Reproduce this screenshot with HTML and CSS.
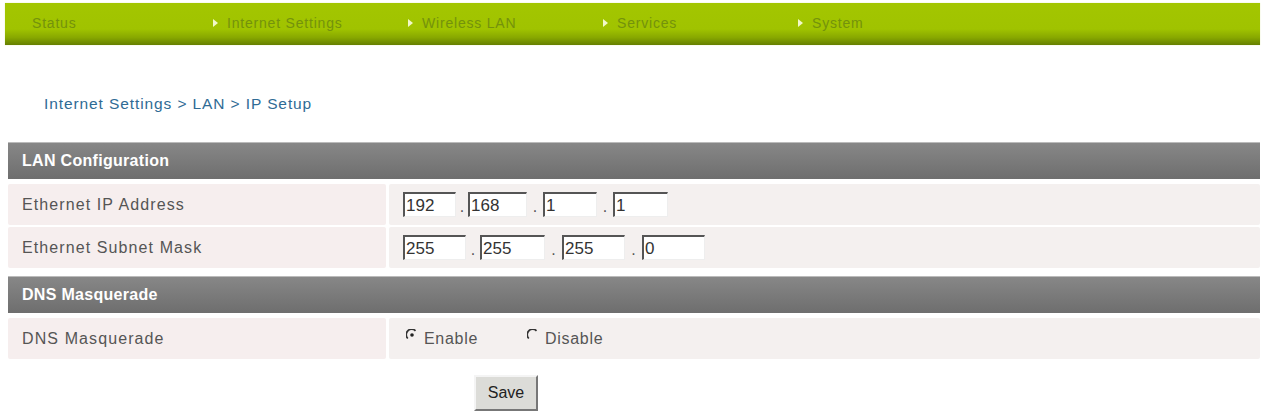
FILE: index.html
```html
<!DOCTYPE html>
<html lang="en">
<head>
    <meta charset="UTF-8">
    <meta name="viewport" content="width=device-width, initial-scale=1.0">
    <title>IP Setup</title>
    <link rel="stylesheet" href="styles.css">
</head>
<body>
    <div class="menu">
        <a class="menu-item"><span class="arrow hidden"></span>Status</a>
        <a class="menu-item"><span class="arrow"></span>Internet Settings</a>
        <a class="menu-item"><span class="arrow"></span>Wireless LAN</a>
        <a class="menu-item"><span class="arrow"></span>Services</a>
        <a class="menu-item"><span class="arrow"></span>System</a>
    </div>

    <p class="crumbs">Internet Settings &gt; LAN &gt; IP Setup</p>

    <form class="settings" onsubmit="return false;">
        <div class="section-head">LAN Configuration</div>
        <div class="row first">
            <div class="label">Ethernet IP Address</div>
            <div class="value ip ip-addr">
                <input type="text" class="octet" value="192"><span class="dot">.</span>
                <input type="text" class="octet" value="168"><span class="dot">.</span>
                <input type="text" class="octet" value="1"><span class="dot">.</span>
                <input type="text" class="octet" value="1">
            </div>
        </div>
        <div class="row">
            <div class="label">Ethernet Subnet Mask</div>
            <div class="value ip ip-mask">
                <input type="text" class="octet" value="255"><span class="dot">.</span>
                <input type="text" class="octet" value="255"><span class="dot">.</span>
                <input type="text" class="octet" value="255"><span class="dot">.</span>
                <input type="text" class="octet" value="0">
            </div>
        </div>

        <div class="section-head second">DNS Masquerade</div>
        <div class="row first">
            <div class="label">DNS Masquerade</div>
            <div class="value">
                <label class="radio">
                    <svg width="12" height="12" viewBox="0 0 12 12">
                        <path d="M9.5 1.8 A5 5 0 0 0 1.8 9.5" fill="none" stroke="#333" stroke-width="1.7"/>
                        <circle cx="6" cy="6" r="1.8" fill="#222"/>
                    </svg>
                    Enable
                </label>
                <label class="radio">
                    <svg width="12" height="12" viewBox="0 0 12 12">
                        <path d="M9.5 1.8 A5 5 0 0 0 1.8 9.5" fill="none" stroke="#333" stroke-width="1.7"/>
                    </svg>
                    Disable
                </label>
            </div>
        </div>

        <div class="actions">
            <button type="submit" class="save">Save</button>
        </div>
    </form>
</body>
</html>
```

FILE: styles.css
```css
body {
    margin: 0;
    padding: 3px 5px 0 5px;
    font-family: "Liberation Sans", Arial, sans-serif;
    background: #fff;
}

/* top menu bar */
.menu {
    display: flex;
    height: 42px;
    align-items: center;
    padding-left: 13px;
    background: linear-gradient(to bottom, #a3c600 0%, #a0c300 62%, #88a800 82%, #657f00 100%);
    box-shadow: 0 0 1px #d8e6a0;
}

.menu-item {
    display: flex;
    align-items: center;
    width: 195px;
    font-size: 14px;
    letter-spacing: 0.8px;
    color: #74920c;
    padding-bottom: 2px;
}

.arrow {
    width: 0;
    height: 0;
    border-top: 4px solid transparent;
    border-bottom: 4px solid transparent;
    border-left: 5px solid #f2f8c8;
    margin-right: 9px;
}

.arrow.hidden {
    visibility: hidden;
}

.crumbs {
    margin: 50px 0 0 39px;
    height: 20px;
    font-size: 15.5px;
    letter-spacing: 0.9px;
    color: #2f6b95;
}

/* settings table */
.settings {
    margin: 27px 0 0 3px;
}

.section-head {
    height: 36px;
    line-height: 36px;
    padding-left: 14px;
    font-size: 16px;
    font-weight: bold;
    letter-spacing: 0.3px;
    color: #fff;
    background: linear-gradient(to bottom, #878787, #6e6e6e);
    border-top: 1px solid #bbb;
}

.section-head.second {
    margin-top: 8px;
}

.row {
    display: flex;
    height: 41px;
    margin-top: 2px;
    gap: 3px;
}

.row.first {
    margin-top: 5px;
}

.label {
    width: 364px;
    padding-left: 14px;
    display: flex;
    align-items: center;
    font-size: 16px;
    letter-spacing: 1.1px;
    color: #555;
    background: #f6eeee;
    border-radius: 2px;
}

.value {
    flex: 1;
    display: flex;
    align-items: center;
    padding-left: 14px;
    background: #f4f0ef;
    border-radius: 2px;
}

.octet {
    height: 25px;
    box-sizing: border-box;
    padding: 1px 1px 0 1px;
    font-family: "Liberation Sans", Arial, sans-serif;
    font-size: 17px;
    color: #333;
    background: #fff;
    border: 1px solid #eee;
    border-top: 2px solid #555;
    border-left: 2px solid #555;
    outline: none;
}

.dot {
    width: 16px;
    text-align: center;
    font-size: 16px;
    color: #555;
    padding-top: 4px;
}

.ip-addr .dot:first-of-type { width: 12px; }
.ip-mask .dot { width: 17px; }
.ip-mask .dot:first-of-type { width: 14px; }

.ip-addr .octet:nth-of-type(1) { width: 53px; }
.ip-addr .octet:nth-of-type(2) { width: 59px; }
.ip-addr .octet:nth-of-type(3) { width: 54px; }
.ip-addr .octet:nth-of-type(4) { width: 55px; }

.ip-mask .octet:nth-of-type(1) { width: 63px; }
.ip-mask .octet:nth-of-type(2) { width: 65px; }
.ip-mask .octet:nth-of-type(3) { width: 63px; }
.ip-mask .octet:nth-of-type(4) { width: 63px; }

.radio {
    display: flex;
    align-items: center;
    gap: 6px;
    margin-right: 46px;
    font-size: 16px;
    letter-spacing: 0.7px;
    color: #555;
}

.radio svg {
    margin-top: -7px;
    margin-left: 3px;
}

.actions {
    display: flex;
    justify-content: flex-start;
    padding-left: 466px;
    margin-top: 16px;
}

.save {
    width: 64px;
    height: 36px;
    font-family: "Liberation Sans", Arial, sans-serif;
    font-size: 16px;
    color: #222;
    background: #dcdcd8;
    border: 2px solid;
    border-color: #f4f4f4 #777 #777 #f4f4f4;
    padding: 0;
}
```
